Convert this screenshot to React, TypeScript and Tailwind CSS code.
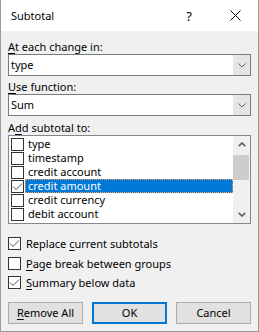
import React from 'react'

const items: [string, boolean, boolean][] = [
  ['type', false, false],
  ['timestamp', false, false],
  ['credit account', false, false],
  ['credit amount', true, true],
  ['credit currency', false, false],
  ['debit account', false, false],
]

function Check({ checked }: { checked?: boolean }) {
  return (
    <div className="w-[13px] h-[13px] shrink-0 border border-[#333333] bg-white">
      {checked && (
        <svg width="11" height="11" viewBox="0 0 11 11" className="block">
          <path d="M1 5.5 L4 8.5 L10 2.5" fill="none" stroke="#4d4d4d" strokeWidth="1" />
        </svg>
      )}
    </div>
  )
}

function Combo({ value }: { value: string }) {
  return (
    <div className="h-[22px] flex border border-[#7a7a7a] bg-white">
      <div className="flex-1 flex items-center pl-[2px]">{value}</div>
      <div className="w-[17px] bg-[#e5e5e5] flex items-center justify-center">
        <svg width="8" height="5" viewBox="0 0 8 5" className="block">
          <path d="M0.5 0.5 L4 4 L7.5 0.5" fill="none" stroke="#606060" strokeWidth="1" />
        </svg>
      </div>
    </div>
  )
}

function Arrow({ up }: { up?: boolean }) {
  return (
    <svg width="8" height="5" viewBox="0 0 8 5" className="block">
      <path
        d={up ? 'M0.8 4.2 L4 1 L7.2 4.2' : 'M0.8 0.8 L4 4 L7.2 0.8'}
        fill="none"
        stroke="#606060"
        strokeWidth="1.7"
      />
    </svg>
  )
}

function Option({ checked, children }: { checked?: boolean; children: React.ReactNode }) {
  return (
    <div className="flex items-center h-[13px]">
      <Check checked={checked} />
      <span className="ml-[5px]">{children}</span>
    </div>
  )
}

export default function App() {
  return (
    <div className="w-[259px] h-[332px] flex flex-col bg-[#f0f0f0] border border-t-0 border-[#9a9a9a] text-[11px] text-black font-['Noto_Sans',sans-serif] leading-[14px]">
      {/* title bar */}
      <div className="h-[31px] bg-white flex items-center shrink-0">
        <span className="flex-1 pl-[10px] text-[11px]">Subtotal</span>
        <div className="w-[46px] flex justify-center text-[13px]">?</div>
        <div className="w-[46px] flex justify-center">
          <svg width="11" height="11" viewBox="0 0 11 11" className="block">
            <path d="M0.5 0.5 L10.5 10.5 M10.5 0.5 L0.5 10.5" stroke="#000" strokeWidth="1" />
          </svg>
        </div>
      </div>

      <div className="px-[7px] flex flex-col">
        <div className="mt-[9px] h-[14px]">
          <span className="underline underline-offset-2">A</span>t each change in:
        </div>
        <Combo value="type" />

        <div className="mt-[4px] h-[14px]">
          <span className="underline underline-offset-2">U</span>se function:
        </div>
        <Combo value="Sum" />

        <div className="mt-[5px] h-[14px]">
          A<span className="underline underline-offset-2">d</span>d subtotal to:
        </div>
        <div className="h-[89px] flex border border-[#828790] bg-white">
          <div className="flex-1 flex flex-col pt-[1px]">
            {items.map(([name, checked, selected]) => (
              <div key={name} className="h-[14px] flex items-center">
                <div className="ml-[2px]">
                  <Check checked={checked} />
                </div>
                <div
                  className={
                    selected
                      ? 'ml-[1px] flex-1 h-[14px] flex items-center pl-[2px] bg-[#0078d7] text-white border border-dotted border-[#f5a25a]'
                      : 'ml-[1px] flex-1 h-[14px] flex items-center pl-[2px] border border-transparent'
                  }
                >
                  {name}
                </div>
              </div>
            ))}
          </div>
          <div className="w-[17px] flex flex-col bg-[#f0f0f0]">
            <div className="h-[17px] flex items-center justify-center">
              <Arrow up />
            </div>
            <div className="flex-1">
              <div className="mt-[2px] mr-[1px] h-[25px] bg-[#cdcdcd]" />
            </div>
            <div className="h-[17px] flex items-center justify-center">
              <Arrow />
            </div>
          </div>
        </div>

        <div className="mt-[13px] flex flex-col gap-[6px]">
          <Option checked>
            Replace <span className="underline underline-offset-2">c</span>urrent subtotals
          </Option>
          <div className="mt-[1px]">
            <Option>
              <span className="underline underline-offset-2">P</span>age break between groups
            </Option>
          </div>
          <Option checked>
            <span className="underline underline-offset-2">S</span>ummary below data
          </Option>
        </div>

        <div className="mt-[13px] flex gap-[9px]">
          <div className="w-[75px] h-[22px] flex items-center justify-center bg-[#e1e1e1] border border-[#adadad]">
            <span>
              <span className="underline underline-offset-2">R</span>emove All
            </span>
          </div>
          <div className="w-[75px] h-[22px] flex items-center justify-center bg-[#e1e1e1] border-2 border-[#0078d7]">
            OK
          </div>
          <div className="w-[75px] h-[22px] flex items-center justify-center bg-[#e1e1e1] border border-[#adadad]">
            Cancel
          </div>
        </div>
      </div>
    </div>
  )
}
